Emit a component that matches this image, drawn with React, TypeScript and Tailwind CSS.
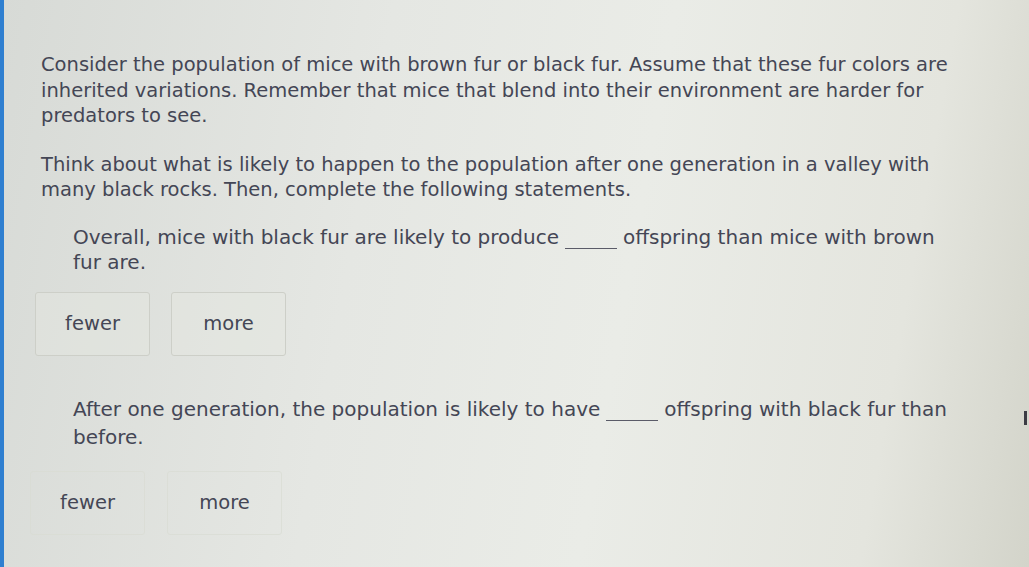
const font = { fontFamily: '"DejaVu Sans", Verdana, sans-serif' };

function Blank() {
  return <span className="mx-[6px] inline-block w-[52px] translate-y-[5px] border-b border-[#5a5b68]" />;
}

function Choice({ label, faint }: { label: string; faint?: boolean }) {
  return (
    <div
      className={
        'flex h-[64px] w-[115px] items-center justify-center rounded-[3px] border ' +
        (faint ? 'border-[#d9dbd3]/70' : 'border-[#cdcfc8] bg-[#e6e8e2]/40')
      }
    >
      {label}
    </div>
  );
}

export default function App() {
  return (
    <div
      style={font}
      className="relative h-[567px] w-[1029px] overflow-hidden bg-[linear-gradient(100deg,#d7dad6_0%,#e5e7e3_35%,#eaece7_60%,#e4e5de_85%,#d3d4ca_100%)] text-[19.5px] leading-[25.5px] text-[#444655]"
    >
      {/* left window frame edge */}
      <div className="absolute left-0 top-0 h-full w-[4px] bg-[#2f7fd0]" />
      {/* cursor sliver at the right edge */}
      <div className="absolute right-[2px] top-[411px] h-[14px] w-[3px] bg-[#3c3c44]" />

      <div className="pl-[41px] pr-[50px] pt-[52px]">
        <p>
          Consider the population of mice with brown fur or black fur. Assume that these fur colors are inherited
          variations. Remember that mice that blend into their environment are harder for predators to see.
        </p>
        <p className="mt-[23px]">
          Think about what is likely to happen to the population after one generation in a valley with many black
          rocks. Then, complete the following statements.
        </p>

        <p className="mt-[22px] pl-[32px] pr-[22px] text-[20px]">
          Overall, mice with black fur are likely to produce
          <Blank />
          offspring than mice with brown fur are.
        </p>
        <div className="-ml-[6px] mt-[16px] flex gap-[21px]">
          <Choice label="fewer" />
          <Choice label="more" />
        </div>

        <p className="mt-[39px] pl-[32px] pr-[22px] text-[20px] leading-[28px]">
          After one generation, the population is likely to have
          <Blank />
          offspring with black fur than before.
        </p>
        <div className="-ml-[11px] mt-[20px] flex gap-[22px]">
          <Choice label="fewer" faint />
          <Choice label="more" faint />
        </div>
      </div>
    </div>
  );
}
